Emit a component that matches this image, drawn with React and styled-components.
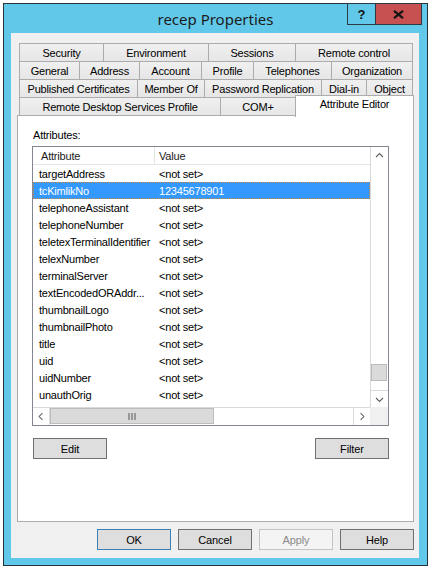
import React from 'react';
import styled, { createGlobalStyle } from 'styled-components';

const GlobalStyle = createGlobalStyle`
  html, body { margin: 0; padding: 0; background: #ffffff; }
  body {
    font-family: "Liberation Sans", Arial, sans-serif;
    font-size: 11px;
    color: #000;
  }
  * { box-sizing: border-box; }
`;

// Desktop behind the dialog
const Desktop = styled.div`
  width: 432px;
  height: 570px;
  padding: 3px 0 0 3px;
  overflow: hidden;
  background: #ffffff;
`;

// Window frame
const Window = styled.div`
  width: 425px;
  height: 563px;
  border: 1px solid #27333b;
  background: #62c8ea;
  display: flex;
  flex-direction: column;
`;

const TitleBar = styled.div`
  height: 29px;
  display: grid;
  grid-template-columns: 1fr auto 1fr;
  align-items: start;
`;

const TitleText = styled.div`
  grid-column: 2;
  align-self: center;
  font-family: "Noto Sans", "Open Sans", sans-serif;
  font-size: 15px;
  color: #1b1b1b;
  margin-top: 1px;
`;

const CaptionButtons = styled.div`
  grid-column: 3;
  justify-self: end;
  margin: -1px 5px 0 0;
  display: flex;
  height: 22px;
  border: 1px solid #2a3a44;
`;

const HelpButton = styled.div`
  width: 28px;
  border-right: 1px solid #2a3a44;
  display: flex;
  align-items: center;
  justify-content: center;
  font-weight: 700;
  font-size: 13px;
  color: #111;
`;

const CloseButton = styled.div`
  width: 45px;
  background: #c75050;
  display: flex;
  align-items: center;
  justify-content: center;
`;

const Client = styled.div`
  margin: 0 8px 0 7px;
  height: 525px;
  background: #f0f0f0;
  display: flex;
  flex-direction: column;
`;

// Tabs
const TabStrip = styled.div`
  margin: 10px 0 0 8px;
  display: flex;
  flex-direction: column;
`;

const TabRow = styled.div`
  display: flex;
  align-items: flex-start;
  height: 19px;
  & + & { margin-top: -1px; }
`;

const Tab = styled.div`
  width: ${p => p.$w}px;
  height: 19px;
  margin-left: -1px;
  &:first-child { margin-left: 0; }
  border: 1px solid #acacac;
  background: linear-gradient(#f0f0f0, #e6e6e6);
  display: flex;
  align-items: center;
  justify-content: center;
  white-space: nowrap;
  letter-spacing: -0.2px;
  color: #000;
`;

const ActiveTab = styled(Tab)`
  height: 22px;
  margin-top: -2px;
  margin-bottom: -1px;
  border-bottom: none;
  background: #ffffff;
  position: relative;
  z-index: 1;
  align-items: flex-start;
  padding-top: 2px;
  line-height: 13px;
`;

// Page of the active tab
const Panel = styled.div`
  margin: -1px 0 0 6px;
  width: 397px;
  height: 407px;
  background: #ffffff;
  border: 1px solid #adadad;
  padding: 12px 0 0 14px;
  display: flex;
  flex-direction: column;
`;

const Label = styled.div`
  margin-left: 1px;
  line-height: 14px;
  letter-spacing: -0.2px;
`;

const ListBox = styled.div`
  margin-top: 4px;
  width: 357px;
  height: 280px;
  border: 1px solid #828790;
  display: grid;
  grid-template-columns: 337px 18px;
  grid-template-rows: 260px 18px;
  background: #ffffff;
`;

const ListContent = styled.div`
  overflow: hidden;
`;

const HeaderRow = styled.div`
  display: flex;
  height: 18px;
  border-bottom: 1px solid #e5e5e5;
`;

const HeadCell = styled.div`
  width: ${p => (p.$w ? `${p.$w}px` : 'auto')};
  flex: ${p => (p.$w ? 'none' : '1')};
  padding-left: ${p => p.$pad}px;
  border-right: ${p => (p.$w ? '1px solid #e5e5e5' : 'none')};
  display: flex;
  align-items: center;
  letter-spacing: -0.2px;
  color: #1a1a1a;
`;

const Row = styled.div`
  display: flex;
  height: 17px;
  align-items: center;
  letter-spacing: -0.2px;
  white-space: nowrap;
  background: ${p => (p.$selected ? '#3399ff' : 'transparent')};
  color: ${p => (p.$selected ? '#ffffff' : '#000000')};
  outline: ${p => (p.$selected ? '1px dotted #c9863c' : 'none')};
  outline-offset: -1px;
`;

const NameCell = styled.div`
  width: 121px;
  padding-left: 6px;
  overflow: hidden;
`;

const ValueCell = styled.div`
  padding-left: 5px;
`;

const VScroll = styled.div`
  border-left: 1px solid #d9d9d9;
  display: flex;
  flex-direction: column;
`;

const ArrowBox = styled.div`
  width: 17px;
  height: 17px;
  flex: none;
  display: flex;
  align-items: center;
  justify-content: center;
  border-top: ${p => (p.$top ? '1px solid #d9d9d9' : 'none')};
  border-left: ${p => (p.$left ? '1px solid #d9d9d9' : 'none')};
  border-right: ${p => (p.$right ? '1px solid #d9d9d9' : 'none')};
`;

const VTrack = styled.div`
  flex: 1;
  display: flex;
  flex-direction: column;
`;

const VThumb = styled.div`
  margin-top: 200px;
  height: 17px;
  width: 16px;
  background: #dadada;
  border: 1px solid #bcbcbc;
`;

const HScroll = styled.div`
  border-top: 1px solid #d9d9d9;
  display: flex;
`;

const HThumb = styled.div`
  width: 164px;
  height: 16px;
  margin-top: 0;
  background: #dadada;
  border: 1px solid #bcbcbc;
  display: flex;
  align-items: center;
  justify-content: center;
`;

const HTrack = styled.div`
  flex: 1;
`;

const Corner = styled.div`
  background: #f0f0f0;
`;

const PanelButtons = styled.div`
  margin: 12px 0 0 1px;
  width: 356px;
  display: flex;
  justify-content: space-between;
`;

const Button = styled.div`
  width: 74px;
  height: 21px;
  display: flex;
  align-items: center;
  justify-content: center;
  letter-spacing: -0.1px;
  background: ${p => (p.$disabled ? '#f4f4f4' : '#dedede')};
  border: 1px solid ${p => (p.$default ? '#3c7fb1' : p.$disabled ? '#c4c4c4' : '#707070')};
  color: ${p => (p.$disabled ? '#8a8a8a' : '#000')};
`;

const DialogButtons = styled.div`
  margin: 7px 5px 0 0;
  display: flex;
  justify-content: flex-end;
  gap: 7px;
`;

const Chevron = ({ dir }) => {
  const pts = {
    up: '5,10 8.5,6.5 12,10',
    down: '5,7 8.5,10.5 12,7',
    left: '10,5 6.5,8.5 10,12',
    right: '7,5 10.5,8.5 7,12',
  }[dir];
  return (
    <svg width="17" height="17" viewBox="0 0 17 17">
      <polyline points={pts} fill="none" stroke="#606060" strokeWidth="1.1" />
    </svg>
  );
};

const tabRows = [
  [['Security', 85], ['Environment', 106], ['Sessions', 88], ['Remote control', 118]],
  [['General', 61], ['Address', 61], ['Account', 63], ['Profile', 53], ['Telephones', 79], ['Organization', 82]],
  [['Published Certificates', 119], ['Member Of', 68], ['Password Replication', 118], ['Dial-in', 46], ['Object', 47]],
];

const attributes = [
  ['targetAddress', '<not set>'],
  ['tcKimlikNo', '12345678901', true],
  ['telephoneAssistant', '<not set>'],
  ['telephoneNumber', '<not set>'],
  ['teletexTerminalIdentifier', '<not set>'],
  ['telexNumber', '<not set>'],
  ['terminalServer', '<not set>'],
  ['textEncodedORAddr...', '<not set>'],
  ['thumbnailLogo', '<not set>'],
  ['thumbnailPhoto', '<not set>'],
  ['title', '<not set>'],
  ['uid', '<not set>'],
  ['uidNumber', '<not set>'],
  ['unauthOrig', '<not set>'],
];

export default function App() {
  return (
    <>
      <GlobalStyle />
      <Desktop>
        <Window>
          <TitleBar>
            <TitleText>recep Properties</TitleText>
            <CaptionButtons>
              <HelpButton>?</HelpButton>
              <CloseButton>
                <svg width="11" height="9" viewBox="0 0 11 9">
                  <path d="M1 0.8 L10 8.2 M10 0.8 L1 8.2" stroke="#151515" strokeWidth="2.2" />
                </svg>
              </CloseButton>
            </CaptionButtons>
          </TitleBar>

          <Client>
            <TabStrip>
              {tabRows.map((row, i) => (
                <TabRow key={i}>
                  {row.map(([name, w]) => (
                    <Tab key={name} $w={w}>{name}</Tab>
                  ))}
                </TabRow>
              ))}
              <TabRow>
                <Tab $w={202}>Remote Desktop Services Profile</Tab>
                <Tab $w={76}>COM+</Tab>
                <ActiveTab $w={119}>Attribute Editor</ActiveTab>
              </TabRow>
            </TabStrip>

            <Panel>
              <Label>Attributes:</Label>
              <ListBox>
                <ListContent>
                  <HeaderRow>
                    <HeadCell $w={122} $pad={8}>Attribute</HeadCell>
                    <HeadCell $pad={4}>Value</HeadCell>
                  </HeaderRow>
                  {attributes.map(([name, value, sel]) => (
                    <Row key={name} $selected={sel}>
                      <NameCell>{name}</NameCell>
                      <ValueCell>{value}</ValueCell>
                    </Row>
                  ))}
                </ListContent>
                <VScroll>
                  <ArrowBox><Chevron dir="up" /></ArrowBox>
                  <VTrack><VThumb /></VTrack>
                  <ArrowBox $top><Chevron dir="down" /></ArrowBox>
                </VScroll>
                <HScroll>
                  <ArrowBox $right><Chevron dir="left" /></ArrowBox>
                  <HThumb>
                    <svg width="8" height="7" viewBox="0 0 8 7">
                      <path d="M1 0 V7 M4 0 V7 M7 0 V7" stroke="#555" strokeWidth="1" />
                    </svg>
                  </HThumb>
                  <HTrack />
                  <ArrowBox $left><Chevron dir="right" /></ArrowBox>
                </HScroll>
                <Corner />
              </ListBox>
              <PanelButtons>
                <Button>Edit</Button>
                <Button>Filter</Button>
              </PanelButtons>
            </Panel>

            <DialogButtons>
              <Button $default>OK</Button>
              <Button>Cancel</Button>
              <Button $disabled>Apply</Button>
              <Button>Help</Button>
            </DialogButtons>
          </Client>
        </Window>
      </Desktop>
    </>
  );
}
